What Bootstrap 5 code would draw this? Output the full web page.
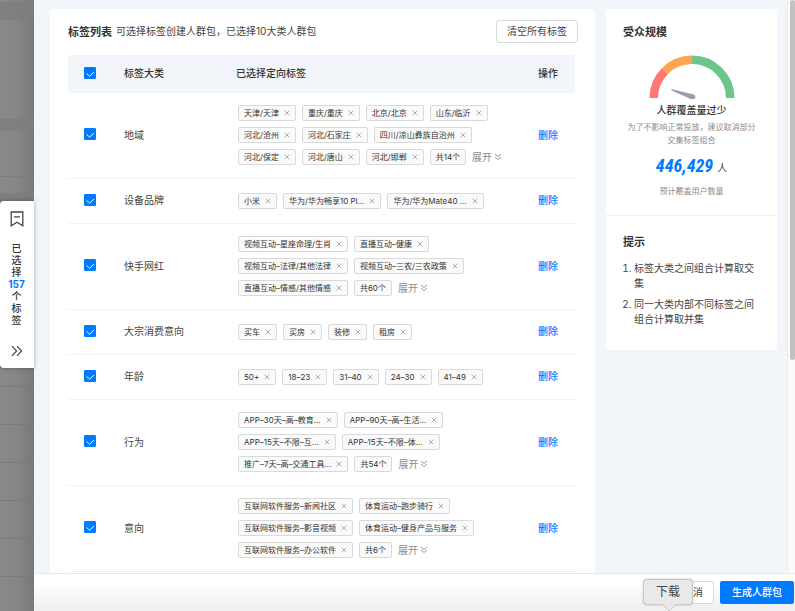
<!DOCTYPE html>
<html lang="zh-CN">
<head>
<meta charset="utf-8">
<meta name="viewport" content="width=device-width, initial-scale=1">
<title>标签列表</title>
<link href="https://cdn.jsdelivr.net/npm/bootstrap@5.3.0/dist/css/bootstrap.min.css" rel="stylesheet">
<style>
  body { font-family: Inter, "Noto Sans CJK SC", sans-serif; font-size: 10px; line-height: 15px; color: #444; background: #858585; }
  .page-rail { width: 34px; flex: none; background: linear-gradient(90deg, #898989 0, #868686 50%, #787878 100%); padding-top: 2px; }
  .rail-band { background: #7b7d7f; opacity: .8; }
  .rail-band.top-band { height: 18px; }
  .rail-band.mid-band { height: 12px; margin-top: 99px; }
  .rail-band.low-band { height: 12px; margin-top: 16px; }
  .rail-lines { height: 46px; border-bottom: 1px solid #7d7d7d; }
  .rail-rows { margin-top: 144px; }
  .rail-rows div { height: 38px; border-bottom: 1px solid #7a7a7a; }
  .picked-tab { position: absolute; left: 0; top: 201px; width: 34px; height: 167px; background: #fff; border: 0; border-radius: 4px 0 0 4px; box-shadow: 0 0 4px rgba(0,0,0,.35); padding: 10px 1px 11px 0; color: #333; }
  .picked-text { font-size: 10px; line-height: 12px; width: 12px; margin-bottom: 4px; font-weight: 500; }
  .blue { color: #007bff; }
  .drawer { background: #f2f6fa; min-width: 0; }
  .drawer-body { min-height: 0; padding: 9px 10px 0 16px; gap: 11px; }
  .panel { background: #fff; border-radius: 3px; }
  .main-panel { min-width: 0; padding: 11px 17px 40px 18px; }
  .side-panel { flex: none; width: 171px; }
  .title { font-size: 11px; font-weight: 700; line-height: 16px; color: #333; margin: 0; }
  .plain-btn { font-size: 10px; line-height: 15px; padding: 3px 10px; border: 1px solid #d9d9d9; border-radius: 3px; background: #fff; color: #444; }
  .table-wrap { margin-top: 12px; padding-right: 3px; }
  .tag-table { width: 100%; table-layout: fixed; border-collapse: separate; border-spacing: 0; }
  .tag-table th { height: 38px; background: #f2f6fa; font-weight: 500; color: #333; padding: 0 8px 2px; }
  .tag-table td { border-bottom: 1px solid #f3f3f3; padding: 0 8px 1px; height: 45px; }
  .tag-table tr.tall td { height: 86px; }
  .tag-table th:first-child, .tag-table td:first-child { padding-left: 16px; padding-bottom: 3px; }
  .tag-table td:nth-child(3) { padding-left: 10px; }
  .c-check { width: 48px; } .c-name { width: 112px; } .c-act { width: 45px; }
  .form-check-input.tick { width: 12px; height: 12px; margin: 0; border-radius: 1px; display: block; }
  .form-check-input.tick:checked { background-color: #007bff; border-color: #007bff; background-size: 11px 11px; background-image: url("data:image/svg+xml,%3csvg xmlns='http://www.w3.org/2000/svg' viewBox='0 0 12 12'%3e%3cpath fill='none' stroke='%23fff' d='M2.2 6.2l3.1 2.9L9.9 4.8'/%3e%3c/svg%3e"); }
  .tags { gap: 6px; }
  .tag-line { gap: 6px; height: 16px; white-space: nowrap; }
  .pill { display: flex; align-items: center; height: 16px; border: 1px solid #d9d9d9; border-radius: 2px; background: #fafafa; padding: 0 5px; gap: 4px; font-size: 8px; line-height: 14px; color: #333; }
  .pill span { padding-right: 1px; }
  .pill button, .more { border: 0; background: none; padding: 0; display: flex; align-items: center; color: #8c8c8c; }
  .more { font-size: 10px; line-height: 15px; gap: 2px; }
  a { text-decoration: none; color: #007bff; font-weight: 500; }
  .audience { padding: 15px 17px 12px; border-bottom: 1px solid #eceff2; height: 207px; }
  .gauge { display: block; margin: 15px auto 0; }
  .state { font-weight: 500; color: #333; margin-top: 4px; }
  .note { font-size: 8px; line-height: 13px; color: #8c8c8c; margin-top: 3px; }
  .count-row { gap: 4px; margin: 7px 0; }
  .count { font-family: "Liberation Sans Narrow", "Roboto Condensed", Roboto, sans-serif; font-weight: 700; font-style: italic; font-size: 18px; line-height: 24px; color: #007bff; }
  .tips { padding: 18px 17px 23px; }
  .tips ol { padding-left: 11px; margin: 11px 0 0; }
  .tips li + li { margin-top: 6px; }
  .scroll-track { flex: none; width: 8px; background: #fafafa; border-left: 1px solid #ececec; padding-left: 2px; }
  .scroll-thumb { height: 360px; background: #c1c1c1; border-radius: 3px; }
  .drawer-foot { flex: none; height: 38px; border-top: 1px solid #e6e9ec; background: linear-gradient(#fff 25%, #efefef); gap: 6px; padding: 7px 1px 0 0; position: relative; }
  .drawer-foot .btn { font-size: 10px; line-height: 15px; padding: 3px 10px; border-radius: 2px; height: 23px; }
  .drawer-foot .btn-primary { background: #007bff; border-color: #007bff; font-weight: 500; padding: 3px 11px; }
  .tip-pop { position: absolute; right: 102px; top: 5px; width: 50px; height: 26px; background: #e9e9e9; border: 1px solid #c9c9c9; border-radius: 4px; font-size: 12px; line-height: 23px; text-align: center; box-shadow: 0 0 3px rgba(0,0,0,.2); color: #444; }
  .tip-pop svg { position: absolute; left: 18px; top: 23px; }
</style>
</head>
<body>
<svg width="0" height="0" class="position-absolute" aria-hidden="true">
  <symbol id="x" viewBox="0 0 6 6"><path d="M.7.7l4.6 4.6M5.3.7L.7 5.3" fill="none" stroke="currentColor" stroke-width=".7"/></symbol>
  <symbol id="down" viewBox="0 0 8 8"><path d="M1 1l3 2.5L7 1M1 4l3 2.5L7 4" fill="none" stroke="currentColor" stroke-width=".9"/></symbol>
</svg>
<div class="d-flex vh-100 overflow-hidden position-relative">
  <div class="page-rail">
    <div class="rail-band top-band"></div>
    <div class="rail-band mid-band"></div>
    <div class="rail-lines"></div>
    <div class="rail-band low-band"></div>
    <div class="rail-rows"><div></div><div></div><div></div><div></div><div></div><div></div></div>
  </div>
  <button type="button" class="picked-tab d-flex flex-column align-items-center justify-content-between">
    <svg width="14" height="16" viewBox="0 0 14 16" fill="none" stroke="#444" stroke-width="1.3"><path d="M1.2 1h11.6v13.8L7 11.2l-5.8 3.6zM4 5.8h6"/></svg>
    <span class="picked-text d-flex flex-column align-items-center"><span>已</span><span>选</span><span>择</span><b class="blue">157</b><span>个</span><span>标</span><span>签</span></span>
    <svg width="12" height="12" viewBox="0 0 12 12" fill="none" stroke="#444" stroke-width="1.2"><path d="M1 1.2L5.6 6 1 10.8M6 1.2L10.6 6 6 10.8"/></svg>
  </button>
  <div class="drawer flex-grow-1 d-flex flex-column">
    <div class="d-flex flex-grow-1 overflow-hidden">
      <div class="drawer-body d-flex flex-grow-1 overflow-hidden">
        <main class="panel main-panel flex-grow-1">
          <div class="d-flex align-items-center justify-content-between">
            <div class="d-flex align-items-center gap-1"><h1 class="title">标签列表</h1><span>可选择标签创建人群包，已选择10大类人群包</span></div>
            <button type="button" class="plain-btn">清空所有标签</button>
          </div>
          <div class="table-wrap">
          <table class="tag-table">
            <colgroup><col class="c-check"><col class="c-name"><col><col class="c-act"></colgroup>
            <thead><tr><th><input class="form-check-input tick" type="checkbox" checked aria-label="全选"></th><th>标签大类</th><th>已选择定向标签</th><th>操作</th></tr></thead>
            <tbody id="rows"></tbody>
          </table>
          </div>
        </main>
        <aside class="side-panel">
          <div class="panel">
            <section class="audience text-center">
              <h2 class="title text-start">受众规模</h2>
              <svg class="gauge" width="86" height="44" viewBox="0 0 86 44" fill="none" stroke-width="8.5">
                <path stroke="#ff7875" d="M4.8 43A38.2 38.2 0 0 1 16 16"/>
                <path stroke="#ffa552" d="M16 16A38.2 38.2 0 0 1 43 4.8"/>
                <path stroke="#6cc68b" d="M43 4.8A38.2 38.2 0 0 1 81.2 43"/>
                <path fill="#9a9fab" stroke="none" d="M22.4 34l.2 1.4 20.2 9.1a2.6 2.6 0 0 0 1.8-4.9z"/>
              </svg>
              <div class="state">人群覆盖量过少</div>
              <div class="note">为了不影响正常投放，建议取消部分<br>交集标签组合</div>
              <div class="count-row d-flex justify-content-center align-items-baseline"><span class="count">446,429</span><span>人</span></div>
              <div class="note">预计覆盖用户数量</div>
            </section>
            <section class="tips">
              <h2 class="title">提示</h2>
              <ol><li>标签大类之间组合计算取交集</li><li>同一大类内部不同标签之间组合计算取并集</li></ol>
            </section>
          </div>
        </aside>
      </div>
      <div class="scroll-track"><div class="scroll-thumb"></div></div>
    </div>
    <footer class="drawer-foot d-flex justify-content-end align-items-start">
      <button type="button" class="btn plain-btn">取消</button>
      <button type="button" class="btn btn-primary">生成人群包</button>
      <div class="tip-pop" role="tooltip">下载<svg width="14" height="8" viewBox="0 0 14 8"><path d="M0 1l7 7 7-7" fill="#e9e9e9" stroke="#c9c9c9"/><path d="M0 0h14v1H0z" fill="#e9e9e9"/></svg></div>
    </footer>
  </div>
</div>
<script>
  const groups = [
    ['地域', [['天津/天津','重庆/重庆','北京/北京','山东/临沂'],['河北/沧州','河北/石家庄','四川/凉山彝族自治州'],['河北/保定','河北/唐山','河北/邯郸']], '共14个'],
    ['设备品牌', [['小米','华为/华为畅享10 Pl...','华为/华为Mate40 ...']]],
    ['快手网红', [['视频互动–星座命理/生肖','直播互动–健康'],['视频互动–法律/其他法律','视频互动–三农/三农政策'],['直播互动–情感/其他情感']], '共60个'],
    ['大宗消费意向', [['买车','买房','装修','租房']]],
    ['年龄', [['50+','18–23','31–40','24–30','41–49']]],
    ['行为', [['APP–30天–高–教育...','APP–90天–高–生活...'],['APP–15天–不限–互...','APP–15天–不限–体...'],['推广–7天–高–交通工具...']], '共54个'],
    ['意向', [['互联网软件服务–新闻社区','体育运动–跑步骑行'],['互联网软件服务–影音视频','体育运动–健身产品与服务'],['互联网软件服务–办公软件']], '共6个']
  ];
  const pill = t => `<span class="pill"><span>${t}</span><button type="button" aria-label="移除"><svg width="6" height="6"><use href="#x"/></svg></button></span>`;
  document.getElementById('rows').innerHTML = groups.map(([name, lines, total], i) => {
    const body = lines.map((l, n) => `<div class="tag-line d-flex align-items-center">${l.map(pill).join('')}${total && n === lines.length - 1 ? `<span class="pill">${total}</span><button type="button" class="more">展开<svg width="8" height="8"><use href="#down"/></svg></button>` : ''}</div>`).join('');
    return `<tr class="${lines.length > 1 ? 'tall' : ''}"><td><input class="form-check-input tick" type="checkbox" checked id="g${i}"></td><td><label for="g${i}">${name}</label></td><td><div class="tags d-flex flex-column">${body}</div></td><td><a href="#">删除</a></td></tr>`;
  }).join('');
</script>
<script src="https://cdn.jsdelivr.net/npm/bootstrap@5.3.0/dist/js/bootstrap.bundle.min.js"></script>
</body>
</html>
